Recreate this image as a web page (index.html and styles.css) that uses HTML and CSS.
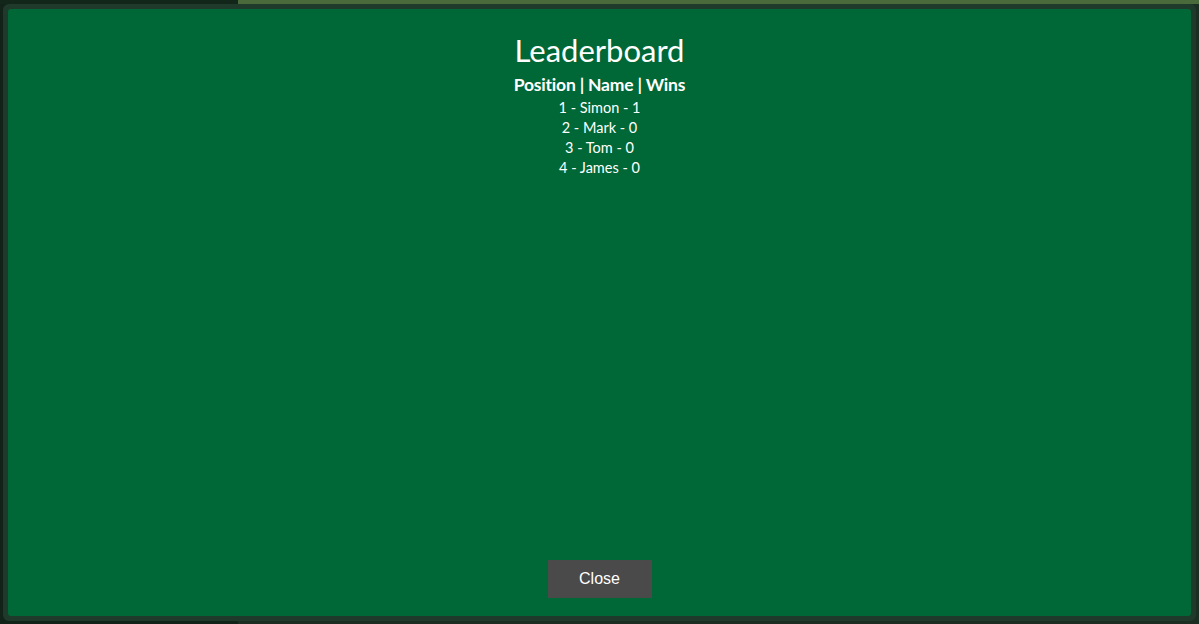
FILE: index.html
```html
<!DOCTYPE html>
<html>
<head>
<meta charset="utf-8">
<link rel="stylesheet" href="styles.css">
</head>
<body>
<div class="page">
  <div class="backdrop">
    <div class="strip-left"></div>
    <div class="strip-right"></div>
  </div>
  <div class="modal">
    <div class="modal-inner">
      <h1 class="title">Leaderboard</h1>
      <h2 class="subtitle">Position | Name | Wins</h2>
      <ul class="rows">
        <li>1 - Simon - 1</li>
        <li>2 - Mark - 0</li>
        <li>3 - Tom - 0</li>
        <li>4 - James - 0</li>
      </ul>
      <div class="spacer"></div>
      <button class="close-btn">Close</button>
    </div>
  </div>
</div>
</body>
</html>
```
FILE: styles.css
```css
html, body {
  margin: 0;
  padding: 0;
  width: 1199px;
  height: 624px;
  overflow: hidden;
  background: #15261c;
}
.page {
  position: relative;
  width: 1199px;
  height: 624px;
  background: linear-gradient(to right, #12241a 0, #12241a 238px, #1c2e22 238px);
}
.backdrop {
  display: flex;
  height: 4px;
}
.strip-left {
  width: 238px;
  background: #12261a;
}
.strip-right {
  flex: 1;
  background: #4b6a3c;
}
.modal {
  position: absolute;
  left: 3px;
  top: 4px;
  width: 1193px;
  height: 617px;
  box-sizing: border-box;
  border: 5px solid #1f3a2a;
  border-radius: 6px;
  background: #1f3a2a;
}
.modal-inner {
  height: 100%;
  box-sizing: border-box;
  background: #006837;
  border-radius: 3px;
  display: flex;
  flex-direction: column;
  align-items: center;
  padding-top: 21px;
  padding-bottom: 18px;
  color: #ffffff;
  font-family: "Lato", "Noto Sans", sans-serif;
}
.title {
  margin: 0;
  font-size: 31px;
  font-weight: 400;
  line-height: 40px;
}
.subtitle {
  margin: 3px 0 0;
  font-size: 17.5px;
  font-weight: 700;
  line-height: 24px;
  letter-spacing: -0.2px;
}
.rows {
  list-style: none;
  margin: 1px 0 0;
  padding: 0;
  text-align: center;
  font-size: 14.5px;
  line-height: 20px;
}
.spacer {
  flex: 1;
}
.close-btn {
  width: 104px;
  height: 38px;
  border: none;
  background: #4a4a4a;
  color: #ffffff;
  font-family: "Liberation Sans", Arial, sans-serif;
  font-size: 16px;
  padding: 0;
}
```
